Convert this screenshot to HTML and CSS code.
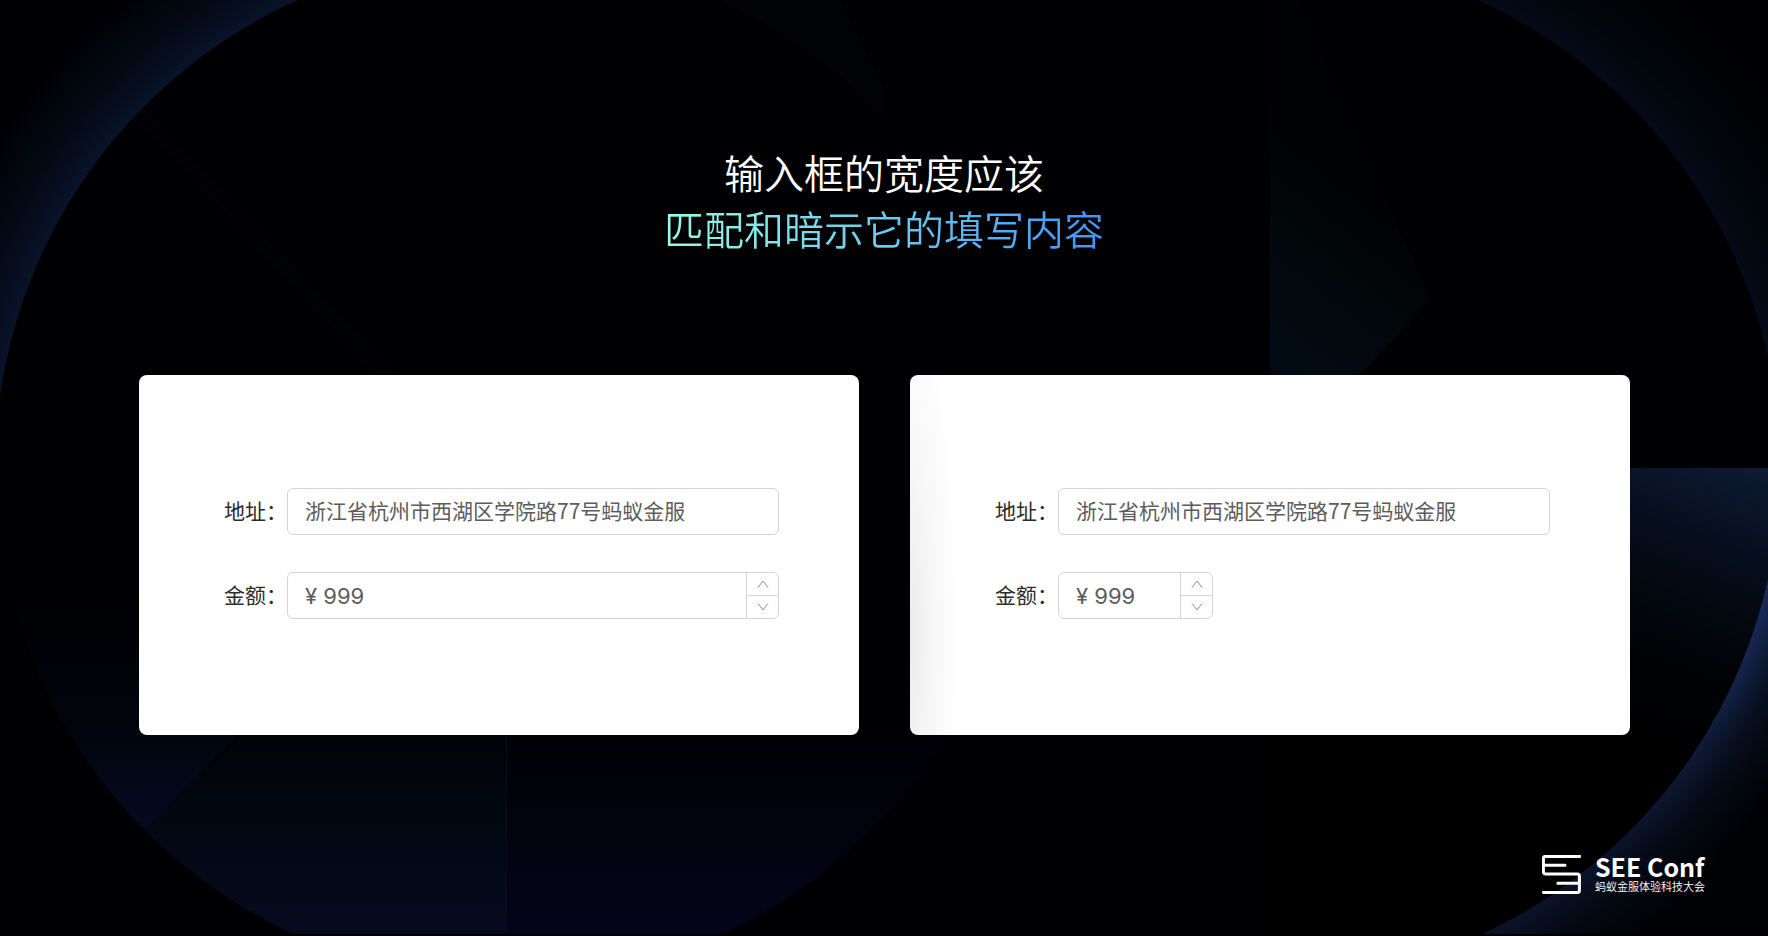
FILE: index.html
```html
<!DOCTYPE html>
<html lang="zh-CN">
<head>
<meta charset="utf-8">
<title>输入框的宽度应该匹配和暗示它的填写内容</title>
<link rel="stylesheet" href="styles.css">
</head>
<body>
<svg class="backdrop" viewBox="0 0 1768 936" preserveAspectRatio="xMidYMid slice" aria-hidden="true">
  <defs>
    <clipPath id="left-disc"><circle cx="508" cy="468" r="513"/></clipPath>
    <clipPath id="right-disc"><circle cx="1267" cy="468" r="513"/></clipPath>
    <radialGradient id="left-halo" gradientUnits="userSpaceOnUse" cx="508" cy="468" r="610">
      <stop offset="0.84" stop-color="#08132a"/><stop offset="0.9" stop-color="#040a16"/><stop offset="1" stop-color="#000002"/>
    </radialGradient>
    <radialGradient id="right-halo" gradientUnits="userSpaceOnUse" cx="1267" cy="468" r="640">
      <stop offset="0.8" stop-color="#040a18"/><stop offset="0.88" stop-color="#010408"/><stop offset="1" stop-color="#000002"/>
    </radialGradient>
    <radialGradient id="right-halo-low" gradientUnits="userSpaceOnUse" cx="1267" cy="468" r="600">
      <stop offset="0.855" stop-color="#182b5a"/><stop offset="0.91" stop-color="#0a152b"/><stop offset="1" stop-color="#010206"/>
    </radialGradient>
    <linearGradient id="halo-fade" x1="0" y1="0" x2="0" y2="1">
      <stop offset="0.3" stop-color="#fff"/><stop offset="0.55" stop-color="#aaa"/><stop offset="0.8" stop-color="#707070"/><stop offset="1" stop-color="#707070"/>
    </linearGradient>
    <mask id="low-mask"><rect x="1440" y="468" width="328" height="468" fill="url(#halo-fade)"/></mask>
    <linearGradient id="wedge" x1="0" y1="0" x2="0" y2="1">
      <stop offset="0.5" stop-color="#010204"/><stop offset="0.75" stop-color="#030815"/><stop offset="1" stop-color="#080b22"/>
    </linearGradient>
    <linearGradient id="wedge-right" x1="0" y1="0" x2="0" y2="1">
      <stop offset="0.3" stop-color="#000002"/><stop offset="1" stop-color="#040519"/>
    </linearGradient>
    <linearGradient id="sliver" x1="0" y1="0" x2="0" y2="1">
      <stop offset="0.3" stop-color="#000002"/><stop offset="0.7" stop-color="#01040b"/><stop offset="1" stop-color="#060a20"/>
    </linearGradient>
    <linearGradient id="beam" gradientUnits="userSpaceOnUse" x1="1270" y1="350" x2="1390" y2="200">
      <stop offset="0" stop-color="#020b15"/><stop offset="0.5" stop-color="#02070a"/><stop offset="1" stop-color="#000103"/>
    </linearGradient>
    <linearGradient id="quadrant" gradientUnits="userSpaceOnUse" x1="1768" y1="450" x2="1660" y2="740">
      <stop offset="0" stop-color="#0f1d38"/><stop offset="0.35" stop-color="#060e1c"/><stop offset="0.7" stop-color="#010307"/><stop offset="1" stop-color="#000001"/>
    </linearGradient>
  </defs>
  <rect width="1768" height="936" fill="#000002"/>
  <rect width="400" height="468" fill="url(#left-halo)"/>
  <path d="M700 0H840L885 90V120Z" fill="#010305"/>
  <rect x="1440" width="328" height="468" fill="url(#right-halo)"/>
  <rect x="1440" y="468" width="328" height="468" fill="url(#right-halo-low)" mask="url(#low-mask)"/>
  <circle cx="508" cy="468" r="513" fill="#000002"/>
  <circle cx="1267" cy="468" r="513" fill="#000002"/>
  <g clip-path="url(#left-disc)">
    <path d="M144 108L396 375H375L134 116Z" fill="#010204"/>
    <path d="M0 468H500L144 831H0Z" fill="url(#sliver)"/>
    <path d="M507 468V936H0V975L144 831Z" fill="url(#wedge)"/>
    <path d="M507 600H1000V936H507Z" fill="url(#wedge-right)"/>
    <rect x="506" y="735" width="1" height="201" fill="#080b20"/>
  </g>
  <g clip-path="url(#right-disc)">
    <path d="M1270 0L1300 0L1430 300L1360 375H1270Z" fill="url(#beam)"/>
    <path d="M1267 468H1780V936H1267Z" fill="url(#quadrant)"/>
  </g>
  <rect y="934" width="1768" height="2" fill="#000"/>
</svg>

<main class="slide">
  <h1 class="title">
    <span class="title-line">输入框的宽度应该</span>
    <span class="title-line title-accent">匹配和暗示它的填写内容</span>
  </h1>

  <section class="cards">
    <form class="card">
      <div class="row">
        <label class="label" for="address-a">地址：</label>
        <input class="field" id="address-a" type="text" value="浙江省杭州市西湖区学院路77号蚂蚁金服">
      </div>
      <div class="row">
        <label class="label" for="amount-a">金额：</label>
        <div class="field number">
          <input class="number-input" id="amount-a" type="text" value="¥ 999">
          <div class="steps">
            <button class="step" type="button" aria-label="增加"><svg class="chevron" viewBox="0 0 12 8"><path d="M1 7.5L6 1L11 7.5"/></svg></button>
            <button class="step" type="button" aria-label="减少"><svg class="chevron" viewBox="0 0 12 8"><path d="M1 .5L6 7L11 .5"/></svg></button>
          </div>
        </div>
      </div>
    </form>

    <form class="card card-shaded">
      <div class="row">
        <label class="label" for="address-b">地址：</label>
        <input class="field" id="address-b" type="text" value="浙江省杭州市西湖区学院路77号蚂蚁金服">
      </div>
      <div class="row">
        <label class="label" for="amount-b">金额：</label>
        <div class="field number number-short">
          <input class="number-input" id="amount-b" type="text" value="¥ 999">
          <div class="steps">
            <button class="step" type="button" aria-label="增加"><svg class="chevron" viewBox="0 0 12 8"><path d="M1 7.5L6 1L11 7.5"/></svg></button>
            <button class="step" type="button" aria-label="减少"><svg class="chevron" viewBox="0 0 12 8"><path d="M1 .5L6 7L11 .5"/></svg></button>
          </div>
        </div>
      </div>
    </form>
  </section>

  <footer class="brand">
    <svg class="brand-mark" viewBox="0 0 39 39" aria-hidden="true">
      <path d="M37.7 1.4H3.4Q1.4 1.4 1.4 3.4V17Q1.4 19 3.4 19H35.4Q37.4 19 37.4 21V35.4Q37.4 37.4 35.4 37.4H1.4M1.4 10.3H23M37.4 28.2H15.8"/>
    </svg>
    <div class="brand-text">
      <span class="brand-name">SEE Conf</span>
      <span class="brand-sub">蚂蚁金服体验科技大会</span>
    </div>
  </footer>
</main>
</body>
</html>
```
FILE: styles.css
```css
* {
  box-sizing: border-box;
}

body {
  margin: 0;
  background: #000002;
  font-family: "Noto Sans CJK SC", sans-serif;
}

.backdrop {
  position: absolute;
  inset: 0;
  width: 100%;
  height: 100%;
}

.slide {
  position: relative;
  display: flex;
  flex-direction: column;
  min-height: 100vh;
  padding: 144px 0 42px;
}

.title {
  display: flex;
  flex-direction: column;
  align-items: center;
  margin: 0 0 119px;
  color: #fff;
  font-size: 40px;
  font-weight: 350;
  line-height: 56px;
}

.title-accent {
  background: linear-gradient(90deg, #98fbe4, #6fd0ee 45%, #3f94fb);
  background-clip: text;
  -webkit-background-clip: text;
  color: transparent;
}

.cards {
  display: grid;
  grid-template-columns: 1fr 1fr;
  gap: 51px;
  padding: 0 138px 0 139px;
}

.card {
  display: flex;
  flex-direction: column;
  gap: 37px;
  padding: 113px 80px 116px 85px;
  border-radius: 8px;
  background: #fff;
}

.card-shaded {
  background: radial-gradient(48px 340px at 0 72%, #ebebeb, #f7f7f7 50%, #fff);
}

.row {
  display: flex;
  align-items: center;
}

.label {
  flex: none;
  width: 63px;
  padding-bottom: 3px;
  color: #2b2b2b;
  font-size: 21px;
  line-height: 32px;
  white-space: nowrap;
}

.field {
  flex: 1;
  min-width: 0;
  height: 47px;
  padding: 0 17px 3px;
  border: 1px solid #d4d4d4;
  border-radius: 6px;
  background: #fff;
  color: #5c5c5c;
  font-family: inherit;
  font-size: 21px;
}

.number {
  display: flex;
  padding: 0;
  overflow: hidden;
}

.number-short {
  flex: none;
  width: 155px;
}

.number-input {
  flex: 1;
  min-width: 0;
  padding: 0 17px;
  border: 0;
  background: transparent;
  color: inherit;
  font-family: Inter, sans-serif;
  font-size: 22px;
}

.steps {
  display: flex;
  flex-direction: column;
  flex: none;
  width: 32px;
  border-left: 1px solid #d4d4d4;
}

.step {
  display: flex;
  flex: 1;
  align-items: center;
  justify-content: center;
  padding: 0;
  border: 0;
  background: transparent;
}

.step + .step {
  border-top: 1px solid #d9d9d9;
}

.chevron {
  width: 12px;
  height: 8px;
  fill: none;
  stroke: #8c8c8c;
}

.brand {
  display: flex;
  align-items: center;
  align-self: flex-end;
  gap: 14px;
  margin-top: auto;
  padding-right: 63px;
  color: #fff;
}

.brand-mark {
  width: 39px;
  height: 39px;
  fill: none;
  stroke: #fff;
  stroke-width: 3;
  stroke-linecap: round;
}

.brand-text {
  display: flex;
  flex-direction: column;
}

.brand-name {
  font-size: 25px;
  font-weight: 700;
  line-height: 24px;
}

.brand-sub {
  font-size: 11px;
  font-weight: 350;
  line-height: 16px;
}
```
